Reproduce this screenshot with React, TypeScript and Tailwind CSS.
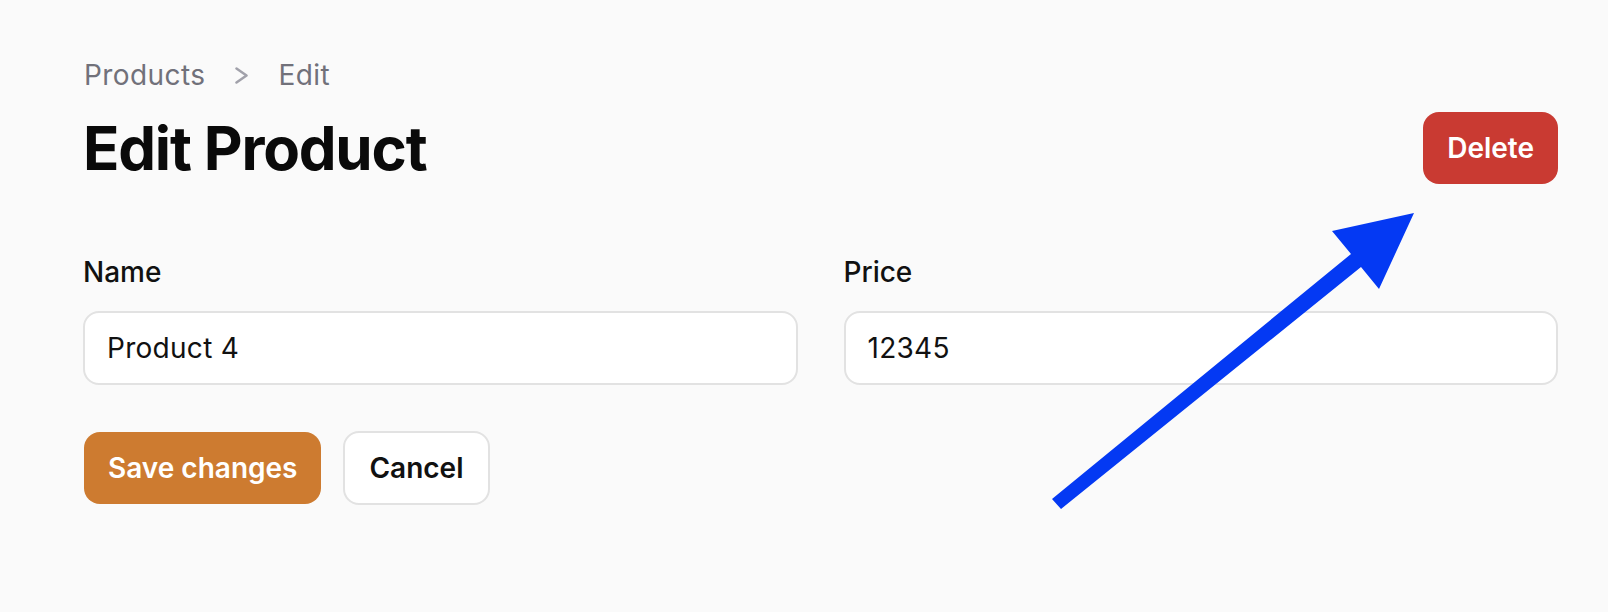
import React from 'react';

function Chevron() {
  return (
    <svg width="13" height="17" viewBox="0 0 13 17" fill="none" className="mx-[30px]">
      <polyline points="1.5,1.5 11.5,8.5 1.5,15.5" stroke="#a1a1aa" strokeWidth="2.5" strokeLinecap="round" strokeLinejoin="round" />
    </svg>
  );
}

function Field({ label, value }: { label: string; value: string }) {
  return (
    <div className="flex flex-col">
      <label className="text-[28px] leading-[40px] font-medium text-[#111111]">{label}</label>
      <input
        readOnly
        value={value}
        className="mt-[19px] h-[74px] w-full rounded-2xl border-2 border-[#e2e2e2] bg-white px-[22px] text-[28px] tracking-[0.01em] text-[#111111] outline-none"
      />
    </div>
  );
}

export default function App() {
  return (
    <div className="relative min-h-screen overflow-hidden bg-[#fafafa] pl-[84px] pr-[50px] pt-[55px] font-['Inter',sans-serif]">
      <nav className="flex items-center text-[28px] leading-[40px] tracking-[0.015em] text-[#71717a]">
        <span>Products</span>
        <Chevron />
        <span>Edit</span>
      </nav>

      <div className="mt-[17px] flex items-center justify-between">
        <h1 className="-ml-px text-[60px] leading-[60px] font-bold tracking-[-0.02em] text-[#0a0a0a]">Edit Product</h1>
        <button className="h-[72px] rounded-2xl bg-[#c93a32] px-6 text-[28px] font-semibold text-white">Delete</button>
      </div>

      <div className="-ml-px mt-[68px] grid grid-cols-2 gap-x-[46px]">
        <Field label="Name" value="Product 4" />
        <Field label="Price" value="12345" />
      </div>

      <div className="mt-[46px] flex items-center gap-[22px]">
        <button className="h-[72px] rounded-2xl bg-[#cd7b30] px-6 text-[28px] font-semibold text-white">Save changes</button>
        <button className="h-[74px] rounded-2xl border-2 border-[#e2e2e2] bg-white px-6 text-[28px] font-semibold text-[#111111]">Cancel</button>
      </div>

      {/* annotation arrow pointing at the delete button */}
      <svg className="pointer-events-none absolute left-0 top-0" width="1608" height="612" viewBox="0 0 1608 612">
        <polygon
          points="1052,499 1351,254 1332,231 1414,213 1379,289 1361,267 1061,509"
          fill="#0439f3"
        />
      </svg>
    </div>
  );
}
